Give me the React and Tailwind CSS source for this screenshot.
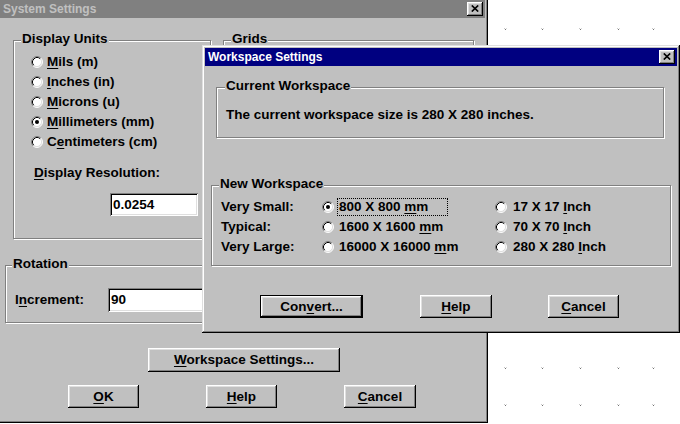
import React from 'react';

// underlined mnemonic letter
const U = ({ children }) => (
  <span className="underline decoration-1 underline-offset-[2px]">{children}</span>
);

const Radio = ({ checked }) => (
  <svg width="12" height="12" viewBox="0 0 12 12" className="shrink-0">
    <circle cx="6" cy="6" r="5" fill="#fff" />
    <path d="M2.11 9.89 A5.5 5.5 0 0 1 9.89 2.11" fill="none" stroke="#808080" strokeWidth="1" />
    <path d="M9.89 2.11 A5.5 5.5 0 0 1 2.11 9.89" fill="none" stroke="#fff" strokeWidth="1" />
    <path d="M2.82 9.18 A4.5 4.5 0 0 1 9.18 2.82" fill="none" stroke="#000" strokeWidth="1" />
    <path d="M9.18 2.82 A4.5 4.5 0 0 1 2.82 9.18" fill="none" stroke="#dfdfdf" strokeWidth="1" />
    {checked && <circle cx="6" cy="6" r="2" fill="#000" />}
  </svg>
);

const CloseBtn = () => (
  <div className="w-[16px] h-[14px] flex items-center justify-center bg-[#c0c0c0] shadow-[inset_-1px_-1px_0_#000,inset_1px_1px_0_#fff,inset_-2px_-2px_0_#808080,inset_2px_2px_0_#dfdfdf]">
    <svg width="8" height="7" viewBox="0 0 8 7" className="mb-[1px]">
      <path d="M0.8 0.5 L7.2 6.5 M7.2 0.5 L0.8 6.5" stroke="#000" strokeWidth="1.7" />
    </svg>
  </div>
);

const Btn = ({ children, className = '', isDefault }) => (
  <div
    className={`${className} flex items-center justify-center bg-[#c0c0c0] ${
      isDefault
        ? 'border border-black shadow-[inset_-1px_-1px_0_#000,inset_1px_1px_0_#fff,inset_-2px_-2px_0_#808080,inset_2px_2px_0_#dfdfdf]'
        : 'shadow-[inset_-1px_-1px_0_#000,inset_1px_1px_0_#fff,inset_-2px_-2px_0_#808080,inset_2px_2px_0_#dfdfdf]'
    }`}
  >
    {children}
  </div>
);

const Field = ({ children, className = '' }) => (
  <div
    className={`${className} bg-white flex items-center pl-[3px] shadow-[inset_1px_1px_0_#808080,inset_-1px_-1px_0_#fff,inset_2px_2px_0_#000,inset_-2px_-2px_0_#dfdfdf]`}
  >
    {children}
  </div>
);

const GroupBox = ({ label, labelLeft = 'left-[7px]', className = '', children }) => (
  <div
    className={`${className} relative shrink-0 border border-[#808080] shadow-[inset_1px_1px_0_#fff,1px_1px_0_#fff]`}
  >
    <span className={`absolute -top-[10px] ${labelLeft} px-[1px] leading-[16px] bg-[#c0c0c0]`}>{label}</span>
    {children}
  </div>
);

const Window = ({ className, title, active, children }) => (
  <div
    className={`${className} absolute flex flex-col bg-[#c0c0c0] p-[3px] shadow-[inset_-1px_-1px_0_#000,inset_1px_1px_0_#dfdfdf,inset_-2px_-2px_0_#808080,inset_2px_2px_0_#fff]`}
  >
    <div
      className={`h-[18px] shrink-0 flex items-center justify-between pl-[3px] pr-[2px] text-[12px] font-bold ${
        active ? 'bg-[#000080] text-white' : 'bg-[#808080] text-[#c0c0c0]'
      }`}
    >
      <span>{title}</span>
      <CloseBtn />
    </div>
    <div className="flex-1 flex flex-col">{children}</div>
  </div>
);

const unitOptions = [
  { k: 'M', rest: 'ils (m)' },
  { k: 'I', rest: 'nches (in)' },
  { k: 'M', rest: 'icrons (u)' },
  { k: 'M', rest: 'illimeters (mm)', checked: true },
  { pre: 'C', k: 'e', rest: 'ntimeters (cm)' },
];

const sizes = [
  { label: 'Very Small:', mm: '800 X 800', inch: '17 X 17', checked: true },
  { label: 'Typical:', mm: '1600 X 1600', inch: '70 X 70' },
  { label: 'Very Large:', mm: '16000 X 16000', inch: '280 X 280' },
];

// grid dots on the canvas behind the dialogs
const dotXs = [505, 542, 580, 618, 653];
const dotYs = [29, 368, 405];

export default function App() {
  return (
    <div className="relative w-[680px] h-[424px] overflow-hidden bg-white text-black font-bold text-[13.5px] leading-[16px] font-['Liberation_Sans',Arial,sans-serif]">
      <svg className="absolute inset-0" width="680" height="424">
        {dotYs.map((y) =>
          dotXs.map((x) => (
            <g key={`${x}-${y}`}>
              <rect x={x} y={y} width="1" height="1" fill="#707070" />
              <rect x={x - 1} y={y - 1} width="1" height="1" fill="#c8c8c8" />
              <rect x={x + 1} y={y - 1} width="1" height="1" fill="#d8d8d8" />
            </g>
          ))
        )}
      </svg>

      {/* System Settings (inactive) */}
      <Window className="left-[-3px] top-[-3px] w-[491px] h-[426px]" title="System Settings">
        <div className="flex mt-[22px]">
          <GroupBox label="Display Units" className="ml-[13px] w-[198px] h-[199px]">
            <div className="pt-[11px] pl-[17px]">
              {unitOptions.map((o, i) => (
                <div key={i} className="h-[20px] flex items-center gap-[4px]">
                  <Radio checked={o.checked} />
                  <span>
                    {o.pre}
                    <U>{o.k}</U>
                    {o.rest}
                  </span>
                </div>
              ))}
              <div className="mt-[13px] ml-[3px]">
                <U>D</U>isplay Resolution:
              </div>
              <Field className="mt-[12px] ml-[79px] w-[88px] h-[23px]">0.0254</Field>
            </div>
          </GroupBox>
          <GroupBox label="Grids" className="ml-[12px] w-[251px] h-[199px]" />
        </div>

        <GroupBox label="Rotation" labelLeft="left-[6px]" className="ml-[5px] mt-[26px] w-[469px] h-[58px]">
          <div className="pt-[22px] pl-[9px] flex items-center">
            <span className="w-[93px]">
              I<U>n</U>crement:
            </span>
            <Field className="w-[200px] h-[24px]">90</Field>
          </div>
        </GroupBox>

        <div className="flex mt-[25px]">
          <Btn className="ml-[148px] w-[192px] h-[24px]">
            <span>
              <U>W</U>orkspace Settings...
            </span>
          </Btn>
        </div>
        <div className="flex mt-[13px] gap-[67px]">
          <Btn className="ml-[68px] w-[71px] h-[23px]">
            <span>
              <U>O</U>K
            </span>
          </Btn>
          <Btn className="w-[71px] h-[23px]">
            <span>
              <U>H</U>elp
            </span>
          </Btn>
          <Btn className="w-[72px] h-[23px]">
            <span>
              <U>C</U>ancel
            </span>
          </Btn>
        </div>
      </Window>

      {/* Workspace Settings (active) */}
      <Window className="left-[202px] top-[45px] w-[478px] h-[288px]" title="Workspace Settings" active>
        <GroupBox label="Current Workspace" labelLeft="left-[8px]" className="ml-[11px] mt-[21px] w-[448px] h-[51px]">
          <div className="pt-[19px] pl-[9px]">The current workspace size is 280 X 280 inches.</div>
        </GroupBox>

        <GroupBox label="New Workspace" className="ml-[6px] mt-[47px] w-[460px] h-[81px]">
          <div className="pt-[11px] pl-[9px]">
            {sizes.map((s) => (
              <div key={s.label} className="h-[20px] flex items-center">
                <span className="w-[101px]">{s.label}</span>
                <div className="w-[173px] flex items-center">
                  <Radio checked={s.checked} />
                  <span
                    className={`ml-[3px] h-[18px] min-w-[111px] px-[1px] flex items-center border border-dotted ${
                      s.checked ? 'border-black' : 'border-transparent'
                    }`}
                  >
                    <span>
                      {s.mm} <U>m</U>m
                    </span>
                  </span>
                </div>
                <div className="flex items-center">
                  <Radio />
                  <span className="ml-[6px]">
                    {s.inch} <U>I</U>nch
                  </span>
                </div>
              </div>
            ))}
          </div>
        </GroupBox>

        <div className="flex mt-[29px]">
          <Btn isDefault className="ml-[55px] w-[103px] h-[23px]">
            <span>
              Con<U>v</U>ert...
            </span>
          </Btn>
          <Btn className="ml-[57px] w-[72px] h-[23px]">
            <span>
              <U>H</U>elp
            </span>
          </Btn>
          <Btn className="ml-[56px] w-[71px] h-[23px]">
            <span>
              <U>C</U>ancel
            </span>
          </Btn>
        </div>
      </Window>
    </div>
  );
}
